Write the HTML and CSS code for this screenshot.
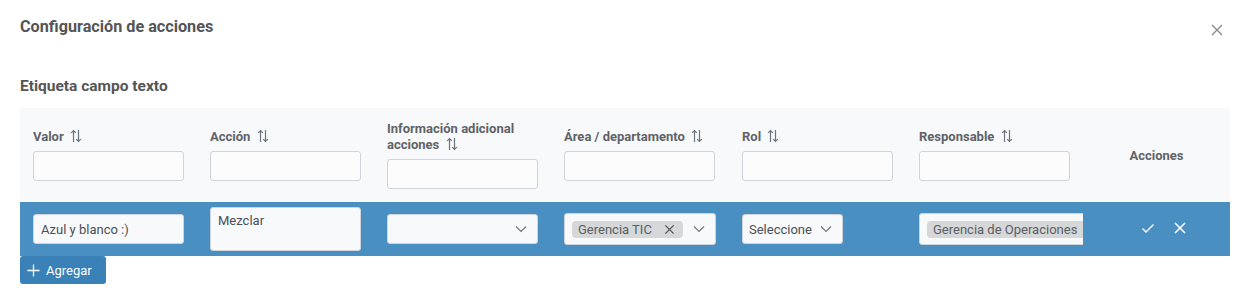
FILE: index.html
```html
<!DOCTYPE html>
<html>
<head>
    <title>Configuración de acciones</title>
    <link rel="stylesheet" href="styles.css">
</head>
<body>
    <div class="dialog">
        <div class="dialog-header">
            <h2>Configuración de acciones</h2>
            <button class="close-btn" aria-label="Cerrar">
                <svg width="12" height="12" viewBox="0 0 12 12"><path d="M1 1L11 11M11 1L1 11" stroke="#888" stroke-width="1.3"/></svg>
            </button>
        </div>

        <h3 class="field-label">Etiqueta campo texto</h3>

        <table class="grid">
            <colgroup>
                <col style="width:177px"><col style="width:177px"><col style="width:177px">
                <col style="width:178px"><col style="width:177px"><col style="width:177px">
                <col style="width:147px">
            </colgroup>
            <thead>
                <tr>
                    <th><div class="th-label">Valor <svg class="sort" viewBox="0 0 12 14"><path d="M3.5 13V1.5M1.2 3.8L3.5 1.5L5.8 3.8M8.5 1V12.5M6.2 10.2L8.5 12.5L10.8 10.2" fill="none" stroke="#6c757d" stroke-width="1.2"/></svg></div><input class="filter" type="text"></th>
                    <th><div class="th-label">Acción <svg class="sort" viewBox="0 0 12 14"><path d="M3.5 13V1.5M1.2 3.8L3.5 1.5L5.8 3.8M8.5 1V12.5M6.2 10.2L8.5 12.5L10.8 10.2" fill="none" stroke="#6c757d" stroke-width="1.2"/></svg></div><input class="filter" type="text"></th>
                    <th><div class="th-label">Información adicional acciones <svg class="sort" viewBox="0 0 12 14"><path d="M3.5 13V1.5M1.2 3.8L3.5 1.5L5.8 3.8M8.5 1V12.5M6.2 10.2L8.5 12.5L10.8 10.2" fill="none" stroke="#6c757d" stroke-width="1.2"/></svg></div><input class="filter" type="text"></th>
                    <th><div class="th-label">Área / departamento <svg class="sort" viewBox="0 0 12 14"><path d="M3.5 13V1.5M1.2 3.8L3.5 1.5L5.8 3.8M8.5 1V12.5M6.2 10.2L8.5 12.5L10.8 10.2" fill="none" stroke="#6c757d" stroke-width="1.2"/></svg></div><input class="filter" type="text"></th>
                    <th><div class="th-label">Rol <svg class="sort" viewBox="0 0 12 14"><path d="M3.5 13V1.5M1.2 3.8L3.5 1.5L5.8 3.8M8.5 1V12.5M6.2 10.2L8.5 12.5L10.8 10.2" fill="none" stroke="#6c757d" stroke-width="1.2"/></svg></div><input class="filter" type="text"></th>
                    <th><div class="th-label">Responsable <svg class="sort" viewBox="0 0 12 14"><path d="M3.5 13V1.5M1.2 3.8L3.5 1.5L5.8 3.8M8.5 1V12.5M6.2 10.2L8.5 12.5L10.8 10.2" fill="none" stroke="#6c757d" stroke-width="1.2"/></svg></div><input class="filter" type="text"></th>
                    <th class="center">Acciones</th>
                </tr>
            </thead>
            <tbody>
                <tr class="editing">
                    <td><input class="cell-input" type="text" value="Azul y blanco :)"></td>
                    <td><textarea class="cell-area">Mezclar</textarea></td>
                    <td>
                        <div class="dropdown">
                            <span class="dd-value"></span>
                            <svg class="chev" viewBox="0 0 12 12"><path d="M1 3.5L6 8.5L11 3.5" fill="none" stroke="#6c757d" stroke-width="1.1"/></svg>
                        </div>
                    </td>
                    <td>
                        <div class="dropdown multi">
                            <span class="dd-value"><span class="chip">Gerencia TIC <svg class="chip-x" viewBox="0 0 12 12"><path d="M1.5 1.5L10.5 10.5M10.5 1.5L1.5 10.5" stroke="#555" stroke-width="1.5"/></svg></span></span>
                            <svg class="chev" viewBox="0 0 12 12"><path d="M1 3.5L6 8.5L11 3.5" fill="none" stroke="#6c757d" stroke-width="1.1"/></svg>
                        </div>
                    </td>
                    <td>
                        <div class="dropdown small">
                            <span class="dd-value">Seleccione</span>
                            <svg class="chev" viewBox="0 0 12 12"><path d="M1 3.5L6 8.5L11 3.5" fill="none" stroke="#6c757d" stroke-width="1.1"/></svg>
                        </div>
                    </td>
                    <td class="clip">
                        <div class="dropdown multi wide">
                            <span class="dd-value"><span class="chip">Gerencia de Operaciones</span></span>
                        </div>
                    </td>
                    <td class="center">
                        <span class="row-actions">
                            <svg viewBox="0 0 14 14"><path d="M1.5 7.5L5 11L12.5 3.5" fill="none" stroke="#fff" stroke-width="1.4"/></svg>
                            <svg viewBox="0 0 14 14"><path d="M2 2L12 12M12 2L2 12" stroke="#fff" stroke-width="1.6"/></svg>
                        </span>
                    </td>
                </tr>
            </tbody>
        </table>

        <button class="add-btn">
            <svg viewBox="0 0 14 14"><path d="M7 0.5V13.5M0.5 7H13.5" stroke="#fff" stroke-width="1.4"/></svg>
            Agregar
        </button>
    </div>
</body>
</html>
```

FILE: styles.css
```css
body { margin: 0; font-family: Roboto, "Liberation Sans", Arial, sans-serif; color: #495057; background: #fff; }
.dialog { padding: 0 20px; }
.dialog-header { display: flex; justify-content: space-between; align-items: center; height: 52px; }
.dialog-header h2 { margin: 0; font-size: 16.2px; font-weight: 700; color: #555; }
.close-btn { border: none; background: none; padding: 0; margin-right: 7px; margin-top: 8px; width: 12px; height: 12px; cursor: pointer; }
.close-btn svg { display: block; width: 12px; height: 12px; }
.field-label { margin: 24px 0 12px 0; font-size: 15.5px; font-weight: 700; color: #555; line-height: 20px; }

.grid { border-collapse: collapse; table-layout: fixed; width: 1210px; }
.grid thead tr { height: 94px; }
.grid th { background: #f8f9fa; text-align: left; vertical-align: middle; padding: 0 13px; font-size: 13px; font-weight: 700; color: #5f6368; }
.grid th.center, .grid td.center { text-align: center; }
.th-label { line-height: 16px; margin-bottom: 6px; }
.sort { width: 12px; height: 14px; margin-left: 3px; vertical-align: -2px; }
.filter { display: block; box-sizing: border-box; width: 151px; height: 30px; border: 1px solid #ced4da; border-radius: 3px; background: #fcfcfd; margin: 0; }

.editing { height: 54px; }
.editing td { background: #4a8fc1; padding: 0 13px; vertical-align: middle; }
.editing td.clip { overflow: hidden; padding-right: 0; }
.cell-input { display: block; box-sizing: border-box; width: 151px; height: 30px; border: 1px solid #ced4da; border-radius: 3px; background: #f8f9fa; padding: 0 7px; margin: 0; font-family: inherit; font-size: 13px; color: #495057; }
.cell-area { display: block; box-sizing: border-box; width: 151px; height: 44px; border: 1px solid #ced4da; border-radius: 3px; background: #f8f9fa; padding: 5px 7px; margin: 0; font-family: inherit; font-size: 13px; color: #495057; resize: none; }
.dropdown { box-sizing: border-box; display: flex; align-items: center; width: 151px; height: 30px; border: 1px solid #ced4da; border-radius: 3px; background: #f8f9fa; padding: 0 10px 0 7px; font-size: 13px; color: #495057; }
.dropdown.multi { height: 32px; width: 152px; }
.dropdown.small { width: 101px; padding-left: 6px; }
.dropdown.wide { width: 200px; padding-right: 0; overflow: hidden; white-space: nowrap; }
.dd-value { flex: 1; overflow: hidden; white-space: nowrap; }
.chev { width: 12px; height: 12px; flex: none; }
.chip { display: inline-flex; align-items: center; background: #d5d7d9; border-radius: 4px; padding: 0 8px 0 6px; height: 17px; line-height: 17px; color: #5a5f63; }
.chip-x { width: 11px; height: 11px; margin-left: 12px; }
.row-actions { display: inline-flex; gap: 18px; align-items: center; margin-left: 14px; }
.row-actions svg { width: 14px; height: 14px; display: block; }

.add-btn { display: flex; align-items: center; gap: 6px; height: 28px; margin: 0; padding: 0 14px 0 7px; border: none; border-radius: 3px; background: #3a81b7; color: #fff; font-family: inherit; font-size: 13px; cursor: pointer; }
.add-btn svg { width: 13px; height: 13px; }
```
